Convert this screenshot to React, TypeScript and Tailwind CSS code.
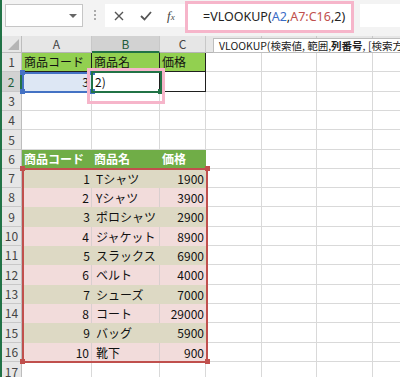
import React from 'react';

const font = "font-['Noto_Sans_CJK_JP','Noto_Sans',sans-serif]";

// widths of the columns after the row header (A..G)
const colW = [70, 68, 46, 56, 55, 56, 40];
const colNames = ['A', 'B', 'C', 'D', 'E', 'F', 'G'];
const rowH = [19, 20, 19, 19, 20, 19, 19, 19, 20, 19, 19, 20, 19, 19, 20, 19, 20];

const items: [number, string, number][] = [
    [1, 'Tシャツ', 1900],
    [2, 'Yシャツ', 3900],
    [3, 'ポロシャツ', 2900],
    [4, 'ジャケット', 8900],
    [5, 'スラックス', 6900],
    [6, 'ベルト', 4000],
    [7, 'シューズ', 7000],
    [8, 'コート', 29000],
    [9, 'バッグ', 5900],
    [10, '靴下', 900],
];

function Cell({ w, className = '', children }: { w: number; className?: string; children?: React.ReactNode }) {
    return (
        <div
            className={`flex h-full shrink-0 items-center overflow-hidden whitespace-nowrap px-[2px] text-[12px] text-[#111] ${className}`}
            style={{ width: w }}
        >
            {children}
        </div>
    );
}

function RowCells({ row }: { row: number }) {
    const grid = 'border-r border-b border-[#d9d9d9]';
    const blanks = (from: number) =>
        colW.slice(from).map((w, i) => <Cell key={i + from} w={w} className={grid} />);

    if (row === 1) {
        const c = 'bg-[#92d050] border-r border-b border-[#1f1f1f]';
        return (
            <>
                <Cell w={colW[0]} className={c}>商品コード</Cell>
                <Cell w={colW[1]} className={c}>商品名</Cell>
                <Cell w={colW[2]} className={c}>価格</Cell>
                {blanks(3)}
            </>
        );
    }
    if (row === 2) {
        const c = 'border-r border-b border-[#1f1f1f]';
        return (
            <>
                <Cell w={colW[0]} className={`${c} justify-end bg-[#dde7f4]`}>3</Cell>
                <Cell w={colW[1]} className={`${c} pl-[3px]`}>2)</Cell>
                <Cell w={colW[2]} className={c} />
                {blanks(3)}
            </>
        );
    }
    if (row === 6) {
        const c = 'bg-[#70ad47] font-bold border-b border-[#d9d9d9]';
        return (
            <>
                <Cell w={colW[0]} className={c}><span className="text-white">商品コード</span></Cell>
                <Cell w={colW[1]} className={c}><span className="text-white">商品名</span></Cell>
                <Cell w={colW[2]} className={c}><span className="text-white">価格</span></Cell>
                {blanks(3)}
            </>
        );
    }
    if (row >= 7 && row <= 16) {
        const [no, name, price] = items[row - 7];
        const odd = row % 2 === 1;
        const bg = odd ? 'bg-[#ddd9c4]' : 'bg-[#f2dcdb] border-r border-[#d9cfcf]';
        return (
            <>
                <Cell w={colW[0]} className={`${bg} justify-end`}>{no}</Cell>
                <Cell w={colW[1]} className={`${bg} pl-[4px]`}>{name}</Cell>
                <Cell w={colW[2]} className={`${odd ? 'bg-[#ddd9c4]' : 'bg-[#f2dcdb]'} justify-end`}>{price}</Cell>
                {blanks(3)}
            </>
        );
    }
    return <>{blanks(0)}</>;
}

function Handle({ className }: { className: string }) {
    return <div className={`absolute h-[5px] w-[5px] ${className}`} />;
}

export default function App() {
    return (
        <div className={`relative h-[377px] w-[400px] overflow-hidden border-l-2 border-[#217346] bg-white ${font}`}>
            {/* Formula bar */}
            <div className="flex h-[36px] items-start bg-[#f3f3f3]">
                <div className="relative ml-[3px] mt-[4px] h-[23px] w-[78px] border border-[#c6c6c6] bg-white">
                    <div className="absolute right-[5px] top-[9px] h-0 w-0 border-x-[4px] border-t-[4px] border-x-transparent border-t-[#666]" />
                </div>
                <div className="ml-[11px] mt-[10px] flex flex-col gap-[2px]">
                    <div className="h-[2px] w-[2px] bg-[#aaa]" />
                    <div className="h-[2px] w-[2px] bg-[#aaa]" />
                    <div className="h-[2px] w-[2px] bg-[#aaa]" />
                </div>
                <div className="ml-[9px] mt-[4px] flex h-[23px] w-[80px] items-center bg-white text-[#555]">
                    <svg width="10" height="10" viewBox="0 0 10 10" className="ml-[9px]">
                        <path d="M1 1 L9 9 M9 1 L1 9" stroke="#555" strokeWidth="1.4" />
                    </svg>
                    <svg width="12" height="10" viewBox="0 0 12 10" className="ml-[16px]">
                        <path d="M1 5 L4.5 8.5 L11 1" stroke="#555" strokeWidth="1.8" fill="none" />
                    </svg>
                    <span className="ml-[15px] font-['Liberation_Serif',serif] text-[13px] italic text-[#444]">
                        f<span className="text-[9px]">x</span>
                    </span>
                </div>
                <div className="mt-[1px] flex h-[32px] w-[169px] items-center border-[3px] border-[#f6b5ca] bg-white pl-[15px] font-['Noto_Sans',sans-serif] text-[12.5px] text-[#222]">
                    =VLOOKUP(<span className="text-[#3a6cc6]">A2</span>,<span className="text-[#c0504d]">A7:C16</span>,2)
                </div>
                <div className="ml-[6px] mt-[4px] h-[23px] flex-1 bg-white" />
            </div>

            {/* Column headers */}
            <div className="flex h-[17px]">
                <div className="relative h-full w-[20px] shrink-0 border-r border-b border-[#bdbdbd] bg-[#e6e6e6]">
                    <svg className="absolute bottom-[2px] right-[2px]" width="11" height="11" viewBox="0 0 11 11">
                        <path d="M11 0 L11 11 L0 11 Z" fill="#b5b5b5" />
                    </svg>
                </div>
                {colNames.map((n, i) => (
                    <div
                        key={n}
                        className={`flex h-full shrink-0 items-center justify-center border-r border-[#c8c8c8] text-[12px] ${
                            n === 'B'
                                ? 'border-b-2 border-b-[#217346] bg-[#d2d2d2] text-[#1e5c3a]'
                                : 'border-b border-b-[#b5b5b5] bg-[#e6e6e6] text-[#444]'
                        }`}
                        style={{ width: colW[i] }}
                    >
                        {i < 3 ? n : null}
                    </div>
                ))}
            </div>

            {/* Rows */}
            {rowH.map((h, idx) => {
                const row = idx + 1;
                return (
                    <div key={row} className="flex" style={{ height: h }}>
                        <div
                            className={`flex h-full w-[20px] shrink-0 items-center justify-center border-b text-[12px] ${
                                row === 2
                                    ? 'border-r-2 border-r-[#217346] border-b-[#c8c8c8] bg-[#d2d2d2] text-[#1e5c3a]'
                                    : 'border-r border-r-[#bdbdbd] border-b-[#c8c8c8] bg-[#e6e6e6] text-[#444]'
                            }`}
                        >
                            {row}
                        </div>
                        <RowCells row={row} />
                    </div>
                );
            })}

            {/* A2 reference highlight */}
            <div className="absolute left-[20px] top-[72px] h-[21px] w-[71px] border-2 border-[#4472c4]" />
            <Handle className="left-[18px] top-[70px] bg-[#4472c4]" />
            <Handle className="left-[18px] top-[89px] bg-[#4472c4]" />
            <Handle className="left-[88px] top-[70px] bg-[#4472c4]" />
            <Handle className="left-[88px] top-[89px] bg-[#4472c4]" />

            {/* Active cell B2 */}
            <div className="absolute left-[89px] top-[71px] h-[22px] w-[71px] border-2 border-[#217346]" />
            <Handle className="left-[156px] top-[89px] bg-[#217346]" />

            {/* Pink annotation around B2 */}
            <div className="absolute left-[85px] top-[68px] h-[36px] w-[78px] border-[3px] border-[#f6b5ca]" />

            {/* A7:C16 reference highlight */}
            <div className="absolute left-[20px] top-[168px] h-[195px] w-[186px] border-2 border-[#c0504d]" />
            <Handle className="left-[18px] top-[166px] bg-[#c0504d]" />
            <Handle className="left-[203px] top-[166px] bg-[#c0504d]" />
            <Handle className="left-[18px] top-[359px] bg-[#c0504d]" />
            <Handle className="left-[203px] top-[359px] bg-[#c0504d]" />

            {/* Function tooltip */}
            <div className="absolute left-[211px] top-[38px] flex h-[15px] w-[200px] items-center whitespace-nowrap border border-[#bebebe] bg-white pl-[5px] text-[10.5px] text-[#222]">
                VLOOKUP(検索値, 範囲, <span className="font-bold">列番号</span>, [検索方法])
            </div>
        </div>
    );
}
